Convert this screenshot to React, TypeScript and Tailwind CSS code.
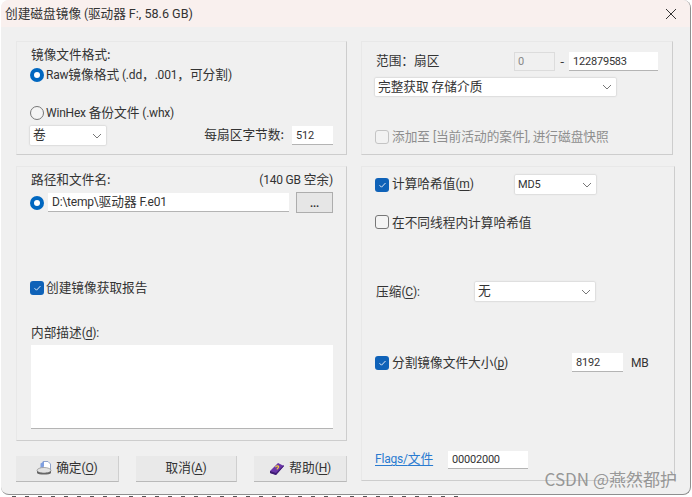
import React from "react";

const latin = { fontFamily: 'Roboto, "Noto Sans", sans-serif' };

const L = ({ children }: { children: React.ReactNode }) => (
  <span className="text-[12px] tracking-[-0.2px]" style={latin}>
    {children}
  </span>
);

const N = ({ children }: { children: React.ReactNode }) => (
  <span className="text-[11px] tracking-[-0.2px]" style={latin}>
    {children}
  </span>
);

const T = ({ className, children }: { className?: string; children: React.ReactNode }) => (
  <span className={"pb-[2px] " + (className ?? "")}>{children}</span>
);

const U = ({ children }: { children: React.ReactNode }) => <span className="underline underline-offset-2">{children}</span>;

const Chevron = () => (
  <svg width="10" height="6" viewBox="0 0 10 6" className="shrink-0">
    <path d="M1 1l4 4 4-4" fill="none" stroke="#777" strokeWidth="1" />
  </svg>
);

const Radio = ({ on }: { on?: boolean }) =>
  on ? (
    <span className="flex h-[14px] w-[14px] shrink-0 items-center justify-center rounded-full bg-[#0067c0]">
      <span className="h-[6px] w-[6px] rounded-full bg-white" />
    </span>
  ) : (
    <span className="h-[14px] w-[14px] shrink-0 rounded-full border border-[#777] bg-[#f4f4f4]" />
  );

const Check = ({ on, dim }: { on?: boolean; dim?: boolean }) =>
  on ? (
    <span className="flex h-[14px] w-[14px] shrink-0 items-center justify-center rounded-[3px] bg-[#0f62b8]">
      <svg width="9" height="8" viewBox="0 0 9 8">
        <path d="M1.5 4.2l2 2L7.5 2" fill="none" stroke="#dfe9f7" strokeWidth="1" />
      </svg>
    </span>
  ) : (
    <span
      className={
        dim
          ? "h-[14px] w-[14px] shrink-0 rounded-[3px] border border-[#c4c4c4] bg-[#f2f2f2]"
          : "h-[14px] w-[14px] shrink-0 rounded-[3px] border border-[#777] bg-[#f4f4f4]"
      }
    />
  );

const Field = ({ className, children }: { className: string; children: React.ReactNode }) => (
  <div className={"flex shrink-0 items-center border-b border-b-[#b4b4b4] bg-white pl-[4px] text-[#333] " + className}>{children}</div>
);

const Select = ({ className, children }: { className: string; children: React.ReactNode }) => (
  <div className={"flex shrink-0 items-center justify-between rounded-[1px] bg-white pl-[3px] pr-[4px] text-[#333] shadow-[0_0_2px_rgba(0,0,0,0.28)] " + className}>
    <T>{children}</T>
    <Chevron />
  </div>
);

const Panel = ({ className, children }: { className: string; children: React.ReactNode }) => (
  <section className={"flex flex-col border border-[#e8e8e8] border-b-[#cdcdcd] border-r-[#cdcdcd] " + className}>{children}</section>
);

const Button = ({ className, children }: { className: string; children: React.ReactNode }) => (
  <button className={"flex h-[26px] items-center justify-center gap-[3px] border-b border-r border-b-[#b9b9b9] border-r-[#cfcfcf] bg-[#e9e9e9] text-[#333] " + className}>
    {children}
  </button>
);

export default function App() {
  return (
    <div
      className="relative flex h-[497px] w-[692px] flex-col overflow-hidden bg-white"
      style={{ fontFamily: '"Noto Sans CJK SC", "Noto Sans", sans-serif' }}
    >
      <div className="ml-[1px] mr-[1px] flex h-[495px] shrink-0 flex-col overflow-hidden rounded-[8px] border-b border-r border-[#8f8f8f] bg-[#f0f0f0] text-[12.7px] leading-none text-[#333]">
        <header className="flex h-[27px] shrink-0 items-center justify-between bg-[#f9f0ee] pl-[4px] pr-[13px]">
          <span>
            创建磁盘镜像 <L>(</L>驱动器 <span className="text-[12.6px]" style={latin}>F:, 58.6 GB)</span>
          </span>
          <svg width="12" height="12" viewBox="0 0 12 12">
            <path d="M1 1l10 10M11 1L1 11" stroke="#333" strokeWidth="1" />
          </svg>
        </header>
        <div className="flex flex-1 pl-[15px] pt-[14px]">
          <div className="flex w-[331px] shrink-0 flex-col">
            <Panel className="h-[114px] pl-[13px] pr-[13px] pt-[5px]">
              <div className="flex h-[16px] items-center pl-[1px]">
                <T>镜像文件格式:</T>
              </div>
              <div className="mt-[4px] flex h-[16px] items-center gap-[2px]">
                <Radio on />
                <T>
                  <L>Raw</L>镜像格式 <L>(.dd</L>，<L>.001</L>，可分割<L>)</L>
                </T>
              </div>
              <div className="mt-[22px] flex h-[16px] items-center gap-[2px]">
                <Radio />
                <T>
                  <L>WinHex </L>备份文件 <L>(.whx)</L>
                </T>
              </div>
              <div className="mt-[5px] flex h-[19px] items-center">
                <Select className="h-[19px] w-[76px]">卷</Select>
                <T className="ml-auto mr-[8px]">每扇区字节数:</T>
                <Field className="h-[19px] w-[41px]">
                  <N>512</N>
                </Field>
              </div>
            </Panel>
            <Panel className="mt-[11px] h-[275px] pl-[13px] pr-[13px] pt-[5px]">
              <div className="flex h-[16px] items-center justify-between pl-[1px]">
                <T>路径和文件名:</T>
                <T>
                  <L>(140 GB </L>空余<L>)</L>
                </T>
              </div>
              <div className="mt-[4px] flex h-[21px] items-center">
                <Radio on />
                <Field className="ml-[4px] h-[19px] w-[241px]">
                  <T>
                    <L>D:\temp\</L>驱动器 <L>F.e01</L>
                  </T>
                </Field>
                <div className="ml-[7px] flex h-[21px] w-[38px] items-end justify-center border border-[#adadad] bg-[#e6e6e6] pb-[3px] font-bold">
                  <N>...</N>
                </div>
              </div>
              <div className="mt-[67px] flex h-[16px] items-center gap-[2px]">
                <Check on />
                <T>创建镜像获取报告</T>
              </div>
              <div className="mt-[29px] flex h-[16px] items-center pl-[1px]">
                <T>
                  内部描述
                  <L>
                    (<U>d</U>):
                  </L>
                </T>
              </div>
              <div className="ml-[1px] mt-[4px] h-[84px] border-b border-b-[#b4b4b4] bg-white" />
            </Panel>
            <div className="mt-[15px] flex">
              <Button className="w-[103px]">
                <svg width="17" height="17" viewBox="0 0 17 17">
                  <path d="M7 1.5h5l2.5 2.5v6H7z" fill="#fff" stroke="#8fa3cc" />
                  <path d="M4.5 3.5L8 1.5v5l-3.5 1.5z" fill="#7f9fe0" />
                  <ellipse cx="8" cy="10.5" rx="7" ry="3" fill="#e2e2e2" stroke="#8a8a8a" strokeWidth="0.7" />
                  <path d="M1 10.5v2.5c1 2 13 2 14 0v-2.5c-1 3-13 3-14 0z" fill="#666" />
                </svg>
                <T>
                  确定
                  <L>
                    (<U>O</U>)
                  </L>
                </T>
              </Button>
              <Button className="ml-[17px] w-[102px]">
                <T>
                  取消
                  <L>
                    (<U>A</U>)
                  </L>
                </T>
              </Button>
              <Button className="ml-[17px] w-[93px]">
                <svg width="16" height="14" viewBox="0 0 16 14" className="mr-[1px]">
                  <path d="M1 9L9 1l6 3-8 9-6-2z" fill="#6a35a8" />
                  <path d="M1 9l6 2 8-8v1l-8 9-6-2z" fill="#3d1c70" />
                  <path d="M6.5 5.2c.6-1.6 3-1.6 3.2-.3.1 1-1.6 1.2-1.7 2.5" fill="none" stroke="#f2cf3c" strokeWidth="1.2" />
                </svg>
                <T>
                  帮助
                  <L>
                    (<U>H</U>)
                  </L>
                </T>
              </Button>
            </div>
          </div>
          <div className="ml-[14px] flex w-[314px] shrink-0 flex-col">
            <Panel className="h-[114px] w-[312px] pl-[13px] pr-[13px] pt-[10px]">
              <div className="flex h-[19px] items-center">
                <T className="w-[139px] pl-[1px]">范围：扇区</T>
                <div className="flex h-[19px] w-[41px] items-center border border-[#dcdcdc] pl-[3px] text-[#888]">
                  <N>0</N>
                </div>
                <span className="ml-[5px] w-[9px]">-</span>
                <Field className="h-[19px] w-[89px]">
                  <N>122879583</N>
                </Field>
              </div>
              <Select className="mt-[7px] h-[18px] w-[241px]">完整获取 存储介质</Select>
              <div className="mt-[33px] flex h-[16px] items-center gap-[3px] text-[#8e8e8e]">
                <Check dim />
                <T>
                  添加至 <L>[</L>当前活动的案件<L>], </L>进行磁盘快照
                </T>
              </div>
            </Panel>
            <Panel className="mt-[11px] h-[315px] pl-[13px] pr-[13px] pt-[8px]">
              <div className="flex h-[19px] items-center">
                <Check on />
                <T className="ml-[3px] w-[123px]">
                  计算哈希值
                  <L>
                    (<U>m</U>)
                  </L>
                </T>
                <Select className="h-[19px] w-[81px]">
                  <N>MD5</N>
                </Select>
              </div>
              <div className="mt-[20px] flex h-[16px] items-center gap-[3px]">
                <Check />
                <span>在不同线程内计算哈希值</span>
              </div>
              <div className="mt-[52px] flex h-[19px] items-center">
                <span className="w-[100px] pl-[1px]">
                  压缩
                  <L>
                    (<U>C</U>):
                  </L>
                </span>
                <Select className="h-[19px] w-[120px]">无</Select>
              </div>
              <div className="mt-[52px] flex h-[19px] items-center">
                <Check on />
                <span className="ml-[3px] w-[180px]">
                  分割镜像文件大小
                  <L>
                    (<U>p</U>)
                  </L>
                </span>
                <Field className="h-[19px] w-[51px]">
                  <N>8192</N>
                </Field>
                <span className="ml-[8px]">
                  <L>MB</L>
                </span>
              </div>
              <div className="mt-[79px] flex h-[18px] items-center">
                <T className="w-[73px] pb-[3px] text-[#2a7bd0] underline underline-offset-2">
                  <L>Flags/</L>文件
                </T>
                <Field className="h-[18px] w-[80px]">
                  <N>00002000</N>
                </Field>
              </div>
            </Panel>
          </div>
        </div>
      </div>
      <div className="ml-[12px] mr-[230px] mt-[1px] h-[1px] bg-[repeating-linear-gradient(90deg,#555_0,#555_4px,transparent_4px,transparent_13px)]" />
      <div className="absolute bottom-[10px] right-[15px] text-[17px] leading-none text-[#8c8c8c]/90">CSDN @燕然都护</div>
    </div>
  );
}
